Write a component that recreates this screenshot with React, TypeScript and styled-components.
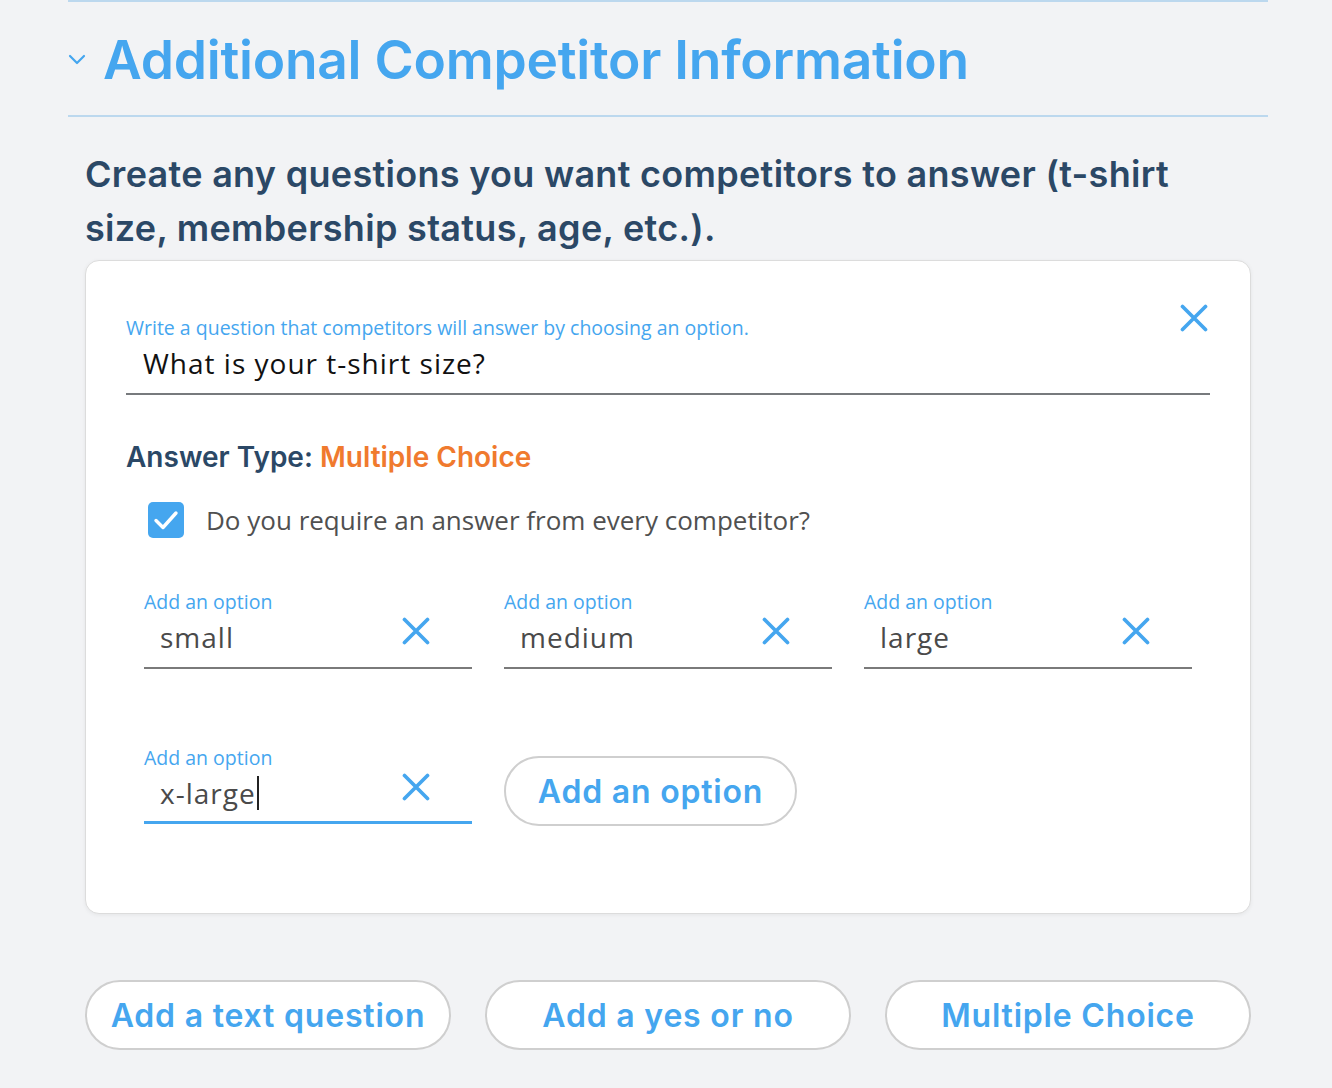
import React from "react";
import styled, { createGlobalStyle } from "styled-components";

const GlobalStyle = createGlobalStyle`
  html, body {
    margin: 0;
    padding: 0;
    background: #f2f3f5;
  }
  * {
    box-sizing: border-box;
  }
`;

const BLUE = "#45a6ef";
const SLATE = "#2b4866";
const HEAD_FONT = `Inter, "Noto Sans", sans-serif`;
const FIELD_FONT = `"Open Sans", "Noto Sans", sans-serif`;

const Page = styled.div`
  width: 1332px;
  min-height: 1088px;
  padding: 0 64px 0 68px;
`;

const Section = styled.section`
  width: 1200px;
  border-top: 2px solid #bcd8ee;
`;

const SectionHeader = styled.div`
  display: flex;
  align-items: center;
  gap: 17px;
  height: 115px;
  padding-top: 1px;
  border-bottom: 2px solid #bcd8ee;
`;

const Title = styled.h2`
  margin: 0;
  font-family: ${HEAD_FONT};
  font-weight: 600;
  font-size: 53.3px;
  letter-spacing: -0.25px;
  color: ${BLUE};
`;

const SectionBody = styled.div`
  padding: 30px 17px 0;
`;

const Intro = styled.p`
  margin: 0 0 5px;
  font-family: ${HEAD_FONT};
  font-weight: 600;
  font-size: 36px;
  letter-spacing: 0.3px;
  line-height: 54px;
  color: ${SLATE};
`;

const Card = styled.div`
  background: #fff;
  border: 1px solid #dcdcdc;
  border-radius: 14px;
  box-shadow: 0 1px 4px rgba(0, 0, 0, 0.06);
  padding: 43px 40px 89px;
`;

const QuestionField = styled.div`
  border-bottom: 2px solid #777a7d;
  padding-bottom: 13px;
`;

const FieldHeader = styled.div`
  display: flex;
  align-items: flex-end;
  justify-content: space-between;
`;

const FieldLabel = styled.div`
  font-family: ${FIELD_FONT};
  font-size: 19.5px;
  font-weight: 400;
  line-height: 24px;
  color: ${BLUE};
`;

const QuestionText = styled.div`
  margin-top: 6px;
  padding-left: 17px;
  font-family: ${FIELD_FONT};
  font-size: 28px;
  line-height: 34px;
  letter-spacing: 1px;
  color: #111;
`;

const CloseButton = styled.button<{ $shift?: number }>`
  border: 0;
  background: transparent;
  padding: 0;
  width: 28px;
  height: 28px;
  margin-top: ${(p) => p.$shift ?? 0}px;
  display: flex;
  align-items: center;
  justify-content: center;
  cursor: pointer;
  flex-shrink: 0;
`;

const QuestionClose = styled(CloseButton)`
  margin: 0 2px 8px 0;
`;

const AnswerType = styled.div`
  margin-top: 45px;
  font-family: ${HEAD_FONT};
  font-weight: 600;
  font-size: 28px;
  line-height: 34px;
  color: ${SLATE};
`;

const Accent = styled.span`
  color: #f07a2e;
`;

const CheckRow = styled.label`
  display: flex;
  align-items: center;
  gap: 22px;
  margin: 28px 0 0 22px;
  font-family: ${FIELD_FONT};
  font-size: 26px;
  color: #505050;
`;

const CheckBox = styled.span`
  width: 36px;
  height: 36px;
  border-radius: 5px;
  background: ${BLUE};
  display: flex;
  align-items: center;
  justify-content: center;
`;

const OptionsGrid = styled.div`
  display: grid;
  grid-template-columns: repeat(3, 328px);
  column-gap: 32px;
  row-gap: 77px;
  margin: 52px 18px 0;
  align-items: end;
`;

const OptionField = styled.div<{ $focused?: boolean }>`
  border-bottom: ${(p) => (p.$focused ? `3px solid ${BLUE}` : "2px solid #7a7a7a")};
  padding-bottom: ${(p) => (p.$focused ? 11 : 13)}px;
`;

const OptionRow = styled.div`
  display: flex;
  align-items: flex-start;
  justify-content: space-between;
  padding: 0 42px 0 16px;
  margin-top: 6px;
`;

const OptionValue = styled.div`
  font-family: ${FIELD_FONT};
  font-size: 28px;
  line-height: 34px;
  letter-spacing: 1px;
  color: #4a4a4a;
  display: flex;
  align-items: center;
`;

const Caret = styled.span`
  display: inline-block;
  width: 2px;
  height: 34px;
  background: #222;
  margin-left: 1px;
`;

const PillButton = styled.button<{ $width?: number }>`
  height: 70px;
  width: ${(p) => (p.$width ? `${p.$width}px` : "100%")};
  border-radius: 35px;
  border: 2px solid #cfcfcf;
  background: #fff;
  font-family: ${HEAD_FONT};
  font-weight: 600;
  font-size: 32px;
  letter-spacing: 0.8px;
  color: ${BLUE};
  cursor: pointer;
`;

const AddOptionCell = styled.div`
  margin-bottom: -2px;
`;

const BottomActions = styled.div`
  display: grid;
  grid-template-columns: repeat(3, 1fr);
  column-gap: 34px;
  margin-top: 66px;
`;

const Chevron = () => (
  <svg width="18" height="12" viewBox="0 0 18 12" fill="none">
    <path d="M2 3 L9 10 L16 3" stroke={BLUE} strokeWidth="2.2" strokeLinecap="round" strokeLinejoin="round" />
  </svg>
);

const CrossIcon = () => (
  <svg width="28" height="28" viewBox="0 0 28 28" fill="none">
    <path d="M2.5 2.5 L25.5 25.5 M25.5 2.5 L2.5 25.5" stroke={BLUE} strokeWidth="3.7" strokeLinecap="round" />
  </svg>
);

const Check = () => (
  <svg width="26" height="22" viewBox="0 0 26 22" fill="none">
    <path d="M3 11.5 L10 18.5 L23 4" stroke="#fff" strokeWidth="3.4" strokeLinecap="round" strokeLinejoin="round" />
  </svg>
);

const options = ["small", "medium", "large"];

const Option: React.FC<{ value: string; focused?: boolean }> = ({ value, focused }) => (
  <OptionField $focused={focused}>
    <FieldLabel>Add an option</FieldLabel>
    <OptionRow>
      <OptionValue>
        {value}
        {focused && <Caret />}
      </OptionValue>
      <CloseButton $shift={-3}>
        <CrossIcon />
      </CloseButton>
    </OptionRow>
  </OptionField>
);

const App: React.FC = () => {
  return (
    <Page>
      <GlobalStyle />
      <Section>
        <SectionHeader>
          <Chevron />
          <Title>Additional Competitor Information</Title>
        </SectionHeader>
        <SectionBody>
          <Intro>
            Create any questions you want competitors to answer (t-shirt size, membership status, age, etc.).
          </Intro>
          <Card>
            <QuestionField>
              <FieldHeader>
                <FieldLabel>Write a question that competitors will answer by choosing an option.</FieldLabel>
                <QuestionClose>
                  <CrossIcon />
                </QuestionClose>
              </FieldHeader>
              <QuestionText>What is your t-shirt size?</QuestionText>
            </QuestionField>

            <AnswerType>
              Answer Type: <Accent>Multiple Choice</Accent>
            </AnswerType>

            <CheckRow>
              <CheckBox>
                <Check />
              </CheckBox>
              Do you require an answer from every competitor?
            </CheckRow>

            <OptionsGrid>
              {options.map((o) => (
                <Option key={o} value={o} />
              ))}
              <Option value="x-large" focused />
              <AddOptionCell>
                <PillButton $width={293}>Add an option</PillButton>
              </AddOptionCell>
            </OptionsGrid>
          </Card>

          <BottomActions>
            <PillButton>Add a text question</PillButton>
            <PillButton>Add a yes or no</PillButton>
            <PillButton>Multiple Choice</PillButton>
          </BottomActions>
        </SectionBody>
      </Section>
    </Page>
  );
};

export default App;
